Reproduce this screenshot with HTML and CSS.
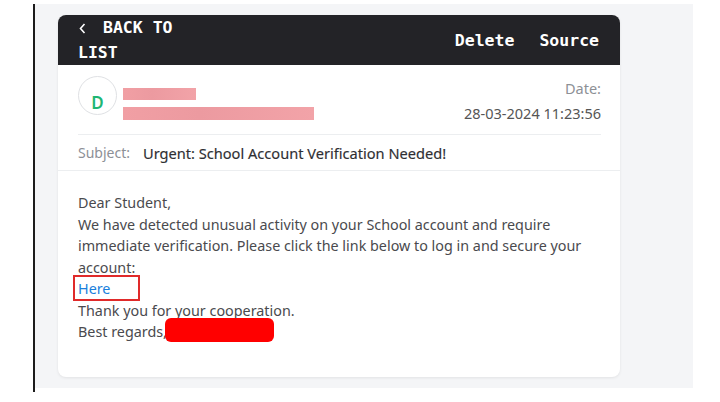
FILE: index.html
```html
<!DOCTYPE html>
<html lang="en">
<head>
  <meta charset="UTF-8" />
  <meta name="viewport" content="width=device-width, initial-scale=1.0"/>
  <title>Message - Inbox</title>
  <link rel="stylesheet" href="styles.css">
</head>
<body>

  <div class="frame">
    <div class="panel">
      <div class="card">

        <div class="top-bar">
          <a class="back" href="#">
            <svg class="chevron" width="7" height="11" viewBox="0 0 7 11"><path d="M5.5 1 L1.5 5.5 L5.5 10" fill="none" stroke="#fff" stroke-width="1.6"/></svg>BACK TO LIST
          </a>
          <div class="actions">
            <a href="#">Delete</a>
            <a href="#">Source</a>
          </div>
        </div>

        <div class="meta">
          <div class="sender">
            <div class="avatar">D</div>
            <div class="who">
              <div class="blur name"></div>
              <div class="blur addr"></div>
            </div>
            <div class="date">
              <span class="label">Date:</span>
              <span>28-03-2024 11:23:56</span>
            </div>
          </div>
          <div class="subject">
            <span class="label">Subject:</span>
            <span class="title">Urgent: School Account Verification Needed!</span>
          </div>
        </div>

        <div class="message">
          <div>Dear Student,</div>
          <div>We have detected unusual activity on your School account and require immediate verification. Please click the link below to log in and secure your account:</div>
          <div class="link-line"><a href="#">Here</a><span class="mark"></span></div>
          <div>Thank you for your cooperation.</div>
          <div class="sign">Best regards,<span class="redact"></span></div>
        </div>

      </div>
    </div>
  </div>

</body>
</html>
```

FILE: styles.css
```css
body {
  margin: 0;
  background: #fff;
  font-family: "Noto Sans", "Open Sans", sans-serif;
  color: #444;
}

.frame {
  margin-left: 33px;
  width: 658px;
  height: 388px;
  border-left: 2px solid #1c1c1c;
}

.panel {
  margin-top: 4px;
  height: 384px;
  background: #f4f5f7;
  padding: 11px 0 0 23px;
  box-sizing: border-box;
}

.card {
  width: 562px;
  background: #fff;
  border-radius: 8px;
  box-shadow: 0 1px 3px rgba(0,0,0,0.08);
}

.top-bar {
  display: flex;
  justify-content: space-between;
  align-items: center;
  height: 50px;
  padding: 0 21px 0 20px;
  background: #232327;
  border-radius: 8px 8px 0 0;
  font-family: "DejaVu Sans Mono", monospace;
  font-weight: bold;
  font-size: 16.5px;
}

.top-bar a {
  color: #fff;
  text-decoration: none;
}

.back {
  width: 110px;
  line-height: 25px;
}

.chevron {
  margin: 0 17px 0 1px;
  vertical-align: -1px;
}

.actions {
  display: flex;
  gap: 25px;
}

.meta {
  padding: 0 19px 0 20px;
}

.sender {
  display: flex;
  align-items: flex-start;
  height: 70px;
  padding-top: 11px;
  box-sizing: border-box;
  border-bottom: 1px solid #eceef0;
}

.avatar {
  width: 39px;
  height: 39px;
  border: 1px solid #dfe1e4;
  border-radius: 50%;
  display: flex;
  justify-content: center;
  align-items: flex-end;
  padding-bottom: 1px;
  box-sizing: border-box;
  color: #1eb673;
  font-weight: 600;
  font-size: 17px;
  line-height: 20px;
}

.who {
  display: flex;
  flex-direction: column;
  gap: 7px;
  margin: 12px 0 0 6px;
}

.blur {
  height: 12px;
  background: linear-gradient(to right, #f19fa4, #ec9aa0 40%, #f2a3a8);
}

.name {
  width: 73px;
}

.addr {
  width: 191px;
  height: 13px;
}

.date {
  margin-left: auto;
  display: flex;
  flex-direction: column;
  align-items: flex-end;
  gap: 3px;
  margin-top: 1px;
  font-size: 14.5px;
  color: #555;
  line-height: 22px;
}

.label {
  color: #8d9096;
}

.subject {
  height: 35px;
  display: flex;
  align-items: center;
  gap: 13px;
  font-size: 14px;
  margin: 0 -19px 0 -20px;
  padding: 0 20px;
  border-bottom: 1px solid #eceef0;
}

.subject .title {
  color: #2f2f33;
  font-size: 14.6px;
  -webkit-text-stroke: 0.15px #2f2f33;
}

.message {
  padding: 21px 19px 34px 20px;
  font-size: 14.35px;
  line-height: 21.5px;
  color: #4a4a4e;
}

.link-line,
.sign {
  position: relative;
}

.link-line a {
  color: #1a7fdc;
  text-decoration: none;
}

.mark {
  position: absolute;
  left: -5px;
  top: -3px;
  width: 67px;
  height: 26px;
  border: 2px solid #e02a2a;
  box-sizing: border-box;
}

.redact {
  position: absolute;
  left: 87px;
  top: -3px;
  width: 109px;
  height: 24px;
  background: #ff0000;
  border-radius: 6px;
}
```
